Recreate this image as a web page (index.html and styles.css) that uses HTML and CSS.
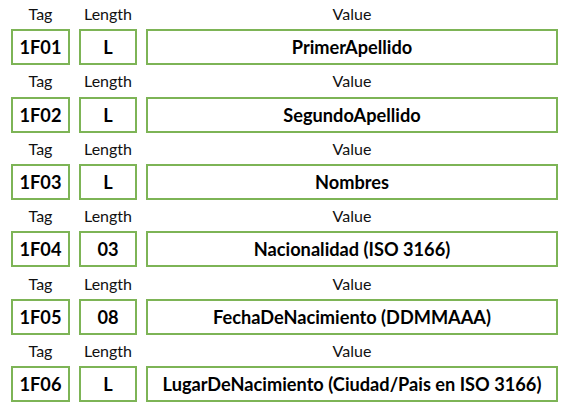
FILE: index.html
```html
<!DOCTYPE html>
<html lang="es">
<head>
<meta charset="utf-8">
<title>TLV</title>
<link rel="stylesheet" href="styles.css">
</head>
<body>
<div class="table">
  <div class="row">
    <div class="label">Tag</div><div class="label">Length</div><div class="label">Value</div>
    <div class="cell">1F01</div><div class="cell">L</div><div class="cell">PrimerApellido</div>
  </div>
  <div class="row">
    <div class="label">Tag</div><div class="label">Length</div><div class="label">Value</div>
    <div class="cell">1F02</div><div class="cell">L</div><div class="cell">SegundoApellido</div>
  </div>
  <div class="row">
    <div class="label">Tag</div><div class="label">Length</div><div class="label">Value</div>
    <div class="cell">1F03</div><div class="cell">L</div><div class="cell">Nombres</div>
  </div>
  <div class="row">
    <div class="label">Tag</div><div class="label">Length</div><div class="label">Value</div>
    <div class="cell">1F04</div><div class="cell">03</div><div class="cell">Nacionalidad (ISO 3166)</div>
  </div>
  <div class="row">
    <div class="label">Tag</div><div class="label">Length</div><div class="label">Value</div>
    <div class="cell">1F05</div><div class="cell">08</div><div class="cell">FechaDeNacimiento (DDMMAAA)</div>
  </div>
  <div class="row">
    <div class="label">Tag</div><div class="label">Length</div><div class="label">Value</div>
    <div class="cell">1F06</div><div class="cell">L</div><div class="cell">LugarDeNacimiento (Ciudad/Pais en ISO 3166)</div>
  </div>
</div>
</body>
</html>
```
FILE: styles.css
```css
html, body {
  margin: 0;
  padding: 0;
  background: #ffffff;
}
body {
  font-family: "Lato", "Open Sans", sans-serif;
  color: #000000;
}
.table {
  padding: 5px 0 0 11px;
}
.row {
  display: grid;
  grid-template-columns: 59px 58px 412px;
  grid-template-rows: 24.3px 36px;
  column-gap: 9px;
  margin-bottom: 7.1px;
}
.label {
  font-size: 16px;
  line-height: 18px;
  text-align: center;
  white-space: nowrap;
  color: #111111;
}
.cell {
  box-sizing: border-box;
  border: 2px solid #7db456;
  display: flex;
  align-items: center;
  justify-content: center;
  font-weight: bold;
  font-size: 18.2px;
  white-space: nowrap;
}
```
